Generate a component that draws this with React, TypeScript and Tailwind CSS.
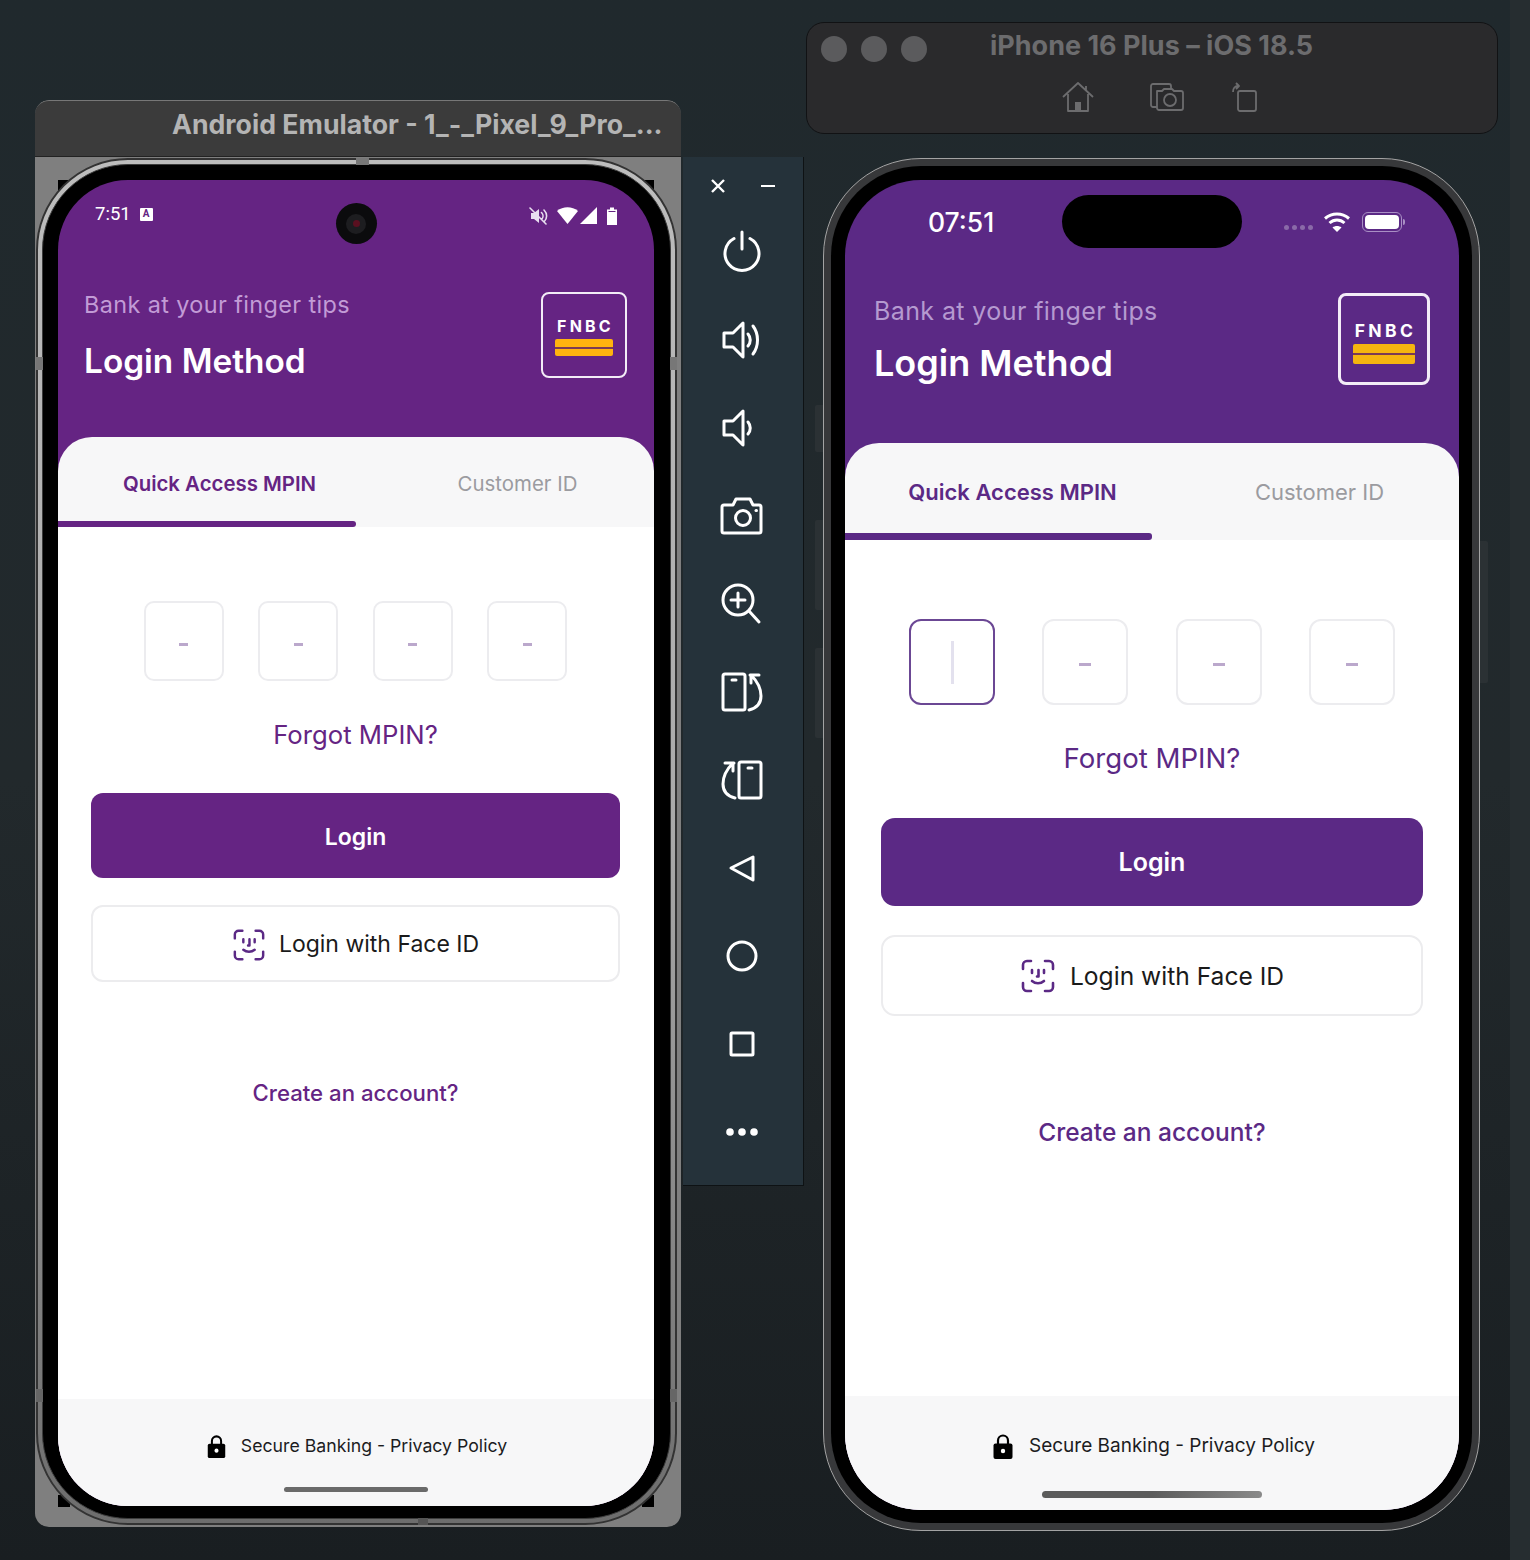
type Theme = {
  purple: string
  purpleText: string
  bank: string
  title: string
  logoBox: string
  logoText: string
  logoBars: string
  tabs: string
  tabPad: string
  tabActive: string
  tabIdle: string
  bar: string
  body: string
  pins: string
  pin: string
  dash: string
  forgot: string
  login: string
  face: string
  faceIcon: string
  create: string
  footer: string
  footerText: string
  lock: string
  homeBar: string
}

const android: Theme = {
  purple: 'bg-[#652483]',
  purpleText: 'text-[#652483]',
  bank: 'text-[23.4px] leading-[30px] tracking-[0.4px] text-[#c29bd6] -mt-[2px]',
  title: 'text-[33.4px] leading-[40px] font-semibold mt-[21px]',
  logoBox: 'w-[86px] h-[86px] rounded-[8px] border-[2.5px] pt-[23px] gap-[4px]',
  logoText: 'text-[16px] leading-[18px] tracking-[3.2px] pl-[3px]',
  logoBars: 'w-[58px] h-[17px] bg-[#ffb30f]',
  tabs: 'h-[90px]',
  tabPad: 'pl-[25px] pt-[10px]',
  tabActive: 'text-[20.4px]',
  tabIdle: 'text-[20.4px]',
  bar: 'h-[6px]',
  body: 'pl-[33px] pr-[34px] pt-[74px]',
  pins: 'gap-[34.4px]',
  pin: 'w-[80px] h-[80px] rounded-[10px]',
  dash: 'w-[9px] h-[3px] mt-[6px]',
  forgot: 'mt-[38px] text-[25.7px] leading-[32px]',
  login: 'mt-[42px] h-[85px] pt-[3px] rounded-[12px] text-[23px]',
  face: 'mt-[27px] h-[77px] pt-[2px] rounded-[12px] text-[23px] gap-[13px]',
  faceIcon: 'w-[34px] h-[34px]',
  create: 'mt-[96px] text-[22.2px] leading-[30px]',
  footer: 'h-[107px] pt-[35px] pl-[2px]',
  footerText: 'text-[17.7px] leading-[24px] gap-[15px]',
  lock: 'w-[19px] h-[23px]',
  homeBar: 'w-[144px] h-[5px] bottom-[14px] bg-[#6a6a6a]',
}

const ios: Theme = {
  purple: 'bg-[#5b2985]',
  purpleText: 'text-[#5b2985]',
  bank: 'text-[25px] leading-[30px] tracking-[0.4px] text-[#b59ad0] mt-[3px]',
  title: 'text-[36px] leading-[44px] font-semibold mt-[15px]',
  logoBox: 'w-[92px] h-[92px] rounded-[8px] border-[3px] pt-[25px] gap-[3px]',
  logoText: 'text-[17.5px] leading-[20px] tracking-[3.4px] pl-[3px]',
  logoBars: 'w-[62px] h-[20px] bg-[#f5b50f]',
  tabs: 'h-[97px]',
  tabPad: 'pl-[28px] pt-[8px]',
  tabActive: 'text-[22px]',
  tabIdle: 'text-[22px]',
  bar: 'h-[7px]',
  body: 'px-[36px] pt-[79px]',
  pins: 'gap-[47.3px]',
  pin: 'w-[86px] h-[86px] rounded-[12px]',
  dash: 'w-[12px] h-[3px] mt-[4px]',
  forgot: 'mt-[36px] text-[27.6px] leading-[34px]',
  login: 'mt-[43px] h-[88px] pt-[1px] rounded-[14px] text-[25px]',
  face: 'mt-[29px] h-[81px] pt-[1px] rounded-[14px] text-[24.6px] gap-[14px]',
  faceIcon: 'w-[36px] h-[36px]',
  create: 'mt-[100px] text-[24.5px] leading-[32px]',
  footer: 'h-[114px] pt-[37px] pl-[4px]',
  footerText: 'text-[19px] leading-[26px] gap-[16px]',
  lock: 'w-[20px] h-[25px]',
  homeBar: 'w-[220px] h-[7px] bottom-[12px] bg-gradient-to-r from-[#5c5c5c] via-[#5c5c5c] to-[#8a8a8a]',
}

function FaceIdIcon({ className }: { className: string }) {
  return (
    <svg viewBox="0 0 36 36" fill="none" stroke="#5b2985" strokeWidth="2.6" strokeLinecap="round" strokeLinejoin="round" className={className}>
      <path d="M3 11V7a4 4 0 0 1 4-4h4M25 3h4a4 4 0 0 1 4 4v4M33 25v4a4 4 0 0 1-4 4h-4M11 33H7a4 4 0 0 1-4-4v-4" />
      <path d="M12 12v3M24 12v3M18.500 12v6.500h-1.500M12 23c3.500 3 8.500 3 12 0" />
    </svg>
  )
}

function LockIcon({ className }: { className: string }) {
  return (
    <svg viewBox="0 0 20 25" className={className}>
      <path d="M5 11V6.500a5 5 0 0 1 10 0V11" fill="none" stroke="black" strokeWidth="2.200" />
      <rect x="0.500" y="9.500" width="19" height="15.500" rx="2" fill="black" />
      <circle cx="10" cy="17" r="2.200" fill="white" />
    </svg>
  )
}

function FnbcLogo({ t }: { t: Theme }) {
  return (
    <div className={`flex flex-col items-center shrink-0 border-[#f3ecf7] ${t.logoBox}`}>
      <span className={`font-bold text-white ${t.logoText}`}>FNBC</span>
      <div className={`flex flex-col justify-center rounded-[2px] ${t.logoBars}`}>
        <div className="h-[2px] bg-[#7a3a55]" />
      </div>
    </div>
  )
}

function LoginSheet({ t, focused }: { t: Theme; focused?: boolean }) {
  return (
    <div className="flex-1 flex flex-col bg-[#f7f7f8] rounded-t-[34px] overflow-hidden relative">
      <div className={`flex ${t.tabs}`}>
        <div className="flex-1 flex flex-col">
          <div className={`flex-1 flex items-center justify-center font-semibold ${t.purpleText} ${t.tabPad} ${t.tabActive}`}>Quick Access MPIN</div>
          <div className={`rounded-r-[3px] ${t.bar} ${t.purple}`} />
        </div>
        <div className="flex-1 flex flex-col">
          <div className={`flex-1 flex items-center justify-center text-[#9b9ba0] ${t.tabPad} ${t.tabIdle}`}>Customer ID</div>
          <div className={t.bar} />
        </div>
      </div>
      <div className={`flex-1 flex flex-col bg-white ${t.body}`}>
        <div className={`flex justify-center ${t.pins}`}>
          {[0, 1, 2, 3].map((i) => (
            <div
              key={i}
              className={`flex items-center justify-center border-2 ${t.pin} ${focused && i === 0 ? 'border-[#6b4794]' : 'border-[#ececef]'}`}
            >
              {focused && i === 0 ? (
                <div className="w-[3px] h-[43px] bg-[#e3e1ee]" />
              ) : (
                <div className={`bg-[#bba8cc] ${t.dash}`} />
              )}
            </div>
          ))}
        </div>
        <div className={`text-center ${t.purpleText} ${t.forgot}`}>Forgot MPIN?</div>
        <button className={`flex items-center justify-center font-semibold text-white ${t.purple} ${t.login}`}>Login</button>
        <button className={`flex items-center justify-center border-2 border-[#ececee] bg-white text-[#1a1a1a] ${t.face}`}>
          <FaceIdIcon className={t.faceIcon} />
          Login with Face ID
        </button>
        <div className={`text-center font-medium ${t.purpleText} ${t.create}`}>Create an account?</div>
      </div>
      <div className={`relative flex justify-center items-start bg-[#f7f7f8] ${t.footer}`}>
        <div className={`flex items-center text-[#1c1c1e] ${t.footerText}`}>
          <LockIcon className={t.lock} />
          Secure Banking - Privacy Policy
        </div>
        <div className={`absolute left-1/2 -translate-x-1/2 rounded-full ${t.homeBar}`} />
      </div>
    </div>
  )
}

function AndroidStatusIcons() {
  return (
    <svg width="90" height="20" viewBox="0 0 90 20" fill="white">
      <g stroke="#e8dff0" strokeWidth="1.600" fill="none" strokeLinecap="round">
        <path d="M2 7h3l5-4v14l-5-4H2z" fill="#e8dff0" stroke="none" />
        <path d="M12.500 6.500c2 2 2 5 0 7M15 4c3.500 3.500 3.500 8.500 0 12M1 2l16 16" />
      </g>
      <path d="M28 5c6-5 15-5 21 0L38.500 18z" />
      <path d="M68 1v17H51z" />
      <path d="M78 3.500h3V1.500h4v2h3V19H78z" />
      <rect x="79.500" y="5" width="7" height="1" fill="#652483" />
    </svg>
  )
}

function AndroidPhone() {
  return (
    <div className="relative z-10 w-[641px] h-[1367px] rounded-[92px] border-2 border-[#333] bg-gradient-to-b from-[#bdbdbd] via-[#a9a9a9] to-[#6d6d6d] p-[4px]">
      <div className="h-full rounded-[86px] border border-[#3c3c3c] bg-black pt-[15px] pl-[15px] pr-[16px] pb-[12px]">
        <div className="h-full rounded-[70px] bg-[#652483] overflow-hidden flex flex-col font-['Inter',sans-serif]">
          <div className="flex flex-col text-white h-[257px]">
            <div className="grid grid-cols-[1fr_auto_1fr] items-start h-[112px] pt-[23px] px-[37px]">
              <div className="flex items-center gap-[9px] pt-[1px] text-[18.500px] leading-[20px] font-['Roboto',sans-serif]">
                7:51
                <span className="flex items-center justify-center w-[13px] h-[13px] bg-white text-[#652483] text-[10px] leading-none font-bold rounded-[1px]">A</span>
              </div>
              <div className="flex items-center justify-center w-[41px] h-[41px] rounded-full bg-[#0b0b0d]">
                <div className="flex items-center justify-center w-[20px] h-[20px] rounded-full bg-[#1d1d20]">
                  <div className="w-[7px] h-[7px] rounded-full bg-[#5a1020]" />
                </div>
              </div>
              <div className="flex justify-end pt-[3px] -mr-[2px]">
                <AndroidStatusIcons />
              </div>
            </div>
            <div className="flex justify-between pl-[26px] pr-[27px]">
              <div className="flex flex-col">
                <span className={android.bank}>Bank at your finger tips</span>
                <span className={android.title}>Login Method</span>
              </div>
              <FnbcLogo t={android} />
            </div>
          </div>
          <LoginSheet t={android} />
        </div>
      </div>
      <div className="absolute left-[318px] -top-[2px] w-[13px] h-[7px] bg-[#777]" />
      <div className="absolute left-[380px] -bottom-[2px] w-[10px] h-[7px] bg-[#555]" />
      <div className="absolute -left-[2px] top-[197px] w-[7px] h-[13px] bg-[#777]" />
      <div className="absolute -right-[2px] top-[197px] w-[7px] h-[13px] bg-[#777]" />
      <div className="absolute -left-[2px] top-[1229px] w-[7px] h-[13px] bg-[#666]" />
      <div className="absolute -right-[2px] top-[1229px] w-[7px] h-[13px] bg-[#666]" />
    </div>
  )
}

function IosPhone() {
  return (
    <div className="absolute left-[823px] top-[158px] w-[657px] h-[1373px] rounded-[98px] border border-[#a3a3a3] bg-[#37383a] p-[7px]">
      <div className="h-full rounded-[90px] bg-black pt-[14px] pl-[14px] pr-[13px] pb-[13px]">
        <div className="h-full rounded-[76px] bg-[#5b2985] overflow-hidden flex flex-col font-['Inter',sans-serif]">
          <div className="flex flex-col text-white h-[263px]">
            <div className="grid grid-cols-[1fr_auto_1fr] items-center h-[113px] pb-[45px] pt-[15px]">
              <div className="pl-[83px] text-[26.500px] leading-[32px] font-medium">07:51</div>
              <div className="w-[180px] h-[53px] rounded-full bg-black" />
              <div className="flex items-center justify-end pr-[54px]">
                <div className="flex gap-[3px] pt-[12px] mr-[10px]">
                  {[0, 1, 2, 3].map((i) => (
                    <div key={i} className="w-[5px] h-[5px] rounded-full bg-[#8a6aa8]" />
                  ))}
                </div>
                <svg width="28" height="22" viewBox="0 0 28 22" fill="none" stroke="white" strokeWidth="3" className="mr-[11px]">
                  <path d="M2 7.500c7-6 17-6 24 0M6.500 12c4.500-4 10.500-4 15 0" />
                  <path d="M14 21l-4.500-4.500c2.500-2 6.500-2 9 0z" fill="white" stroke="none" />
                </svg>
                <div className="flex items-center">
                  <div className="w-[40px] h-[20px] rounded-[6px] border-[1.5px] border-[#a98fc4] p-[2px]">
                    <div className="h-full rounded-[4px] bg-white" />
                  </div>
                  <div className="w-[2px] h-[6px] rounded-r-full bg-[#a98fc4] ml-[1px]" />
                </div>
              </div>
            </div>
            <div className="flex justify-between pl-[29px] pr-[29px]">
              <div className="flex flex-col">
                <span className={ios.bank}>Bank at your finger tips</span>
                <span className={ios.title}>Login Method</span>
              </div>
              <FnbcLogo t={ios} />
            </div>
          </div>
          <LoginSheet t={ios} focused />
        </div>
      </div>
      <div className="absolute -left-[9px] top-[246px] w-[8px] h-[47px] rounded-l-[2px] bg-[#2b3134]" />
      <div className="absolute -left-[9px] top-[361px] w-[8px] h-[90px] rounded-l-[2px] bg-[#2b3134]" />
      <div className="absolute -left-[9px] top-[489px] w-[8px] h-[90px] rounded-l-[2px] bg-[#2b3134]" />
      <div className="absolute -right-[9px] top-[382px] w-[8px] h-[142px] rounded-r-[2px] bg-[#2b3134]" />
    </div>
  )
}

function ToolIcon({ children }: { children: React.ReactNode }) {
  return (
    <div className="h-[88px] flex items-center justify-center">
      <svg width="48" height="48" viewBox="0 0 48 48" fill="none" stroke="white" strokeWidth="3" strokeLinecap="round" strokeLinejoin="round">
        {children}
      </svg>
    </div>
  )
}

function EmulatorToolbar() {
  return (
    <div className="absolute left-[683px] top-[157px] w-[121px] h-[1029px] pr-[2px] bg-[#25323a] border-r border-b border-[#0e1214]">
      <div className="h-[51px] relative">
        <svg width="16" height="16" viewBox="0 0 16 16" fill="none" stroke="white" strokeWidth="2.400" className="absolute left-[27px] top-[21px]">
          <path d="M2 2l12 12M14 2L2 14" />
        </svg>
        <div className="absolute left-[78px] top-[28px] w-[14px] h-[2px] bg-white" />
      </div>
      <ToolIcon>
        <path d="M16 10.500a17 17 0 1 0 16 0M24 4v17" />
      </ToolIcon>
      <ToolIcon>
        <path d="M6 17h9L25 7v34L15 31H6z" />
        <path d="M30 18c3 3.500 3 8.500 0 12M35 10c6 8 6 20 0 28" />
      </ToolIcon>
      <ToolIcon>
        <path d="M6 17h9L25 7v34L15 31H6z" />
        <path d="M30 18c3 3.500 3 8.500 0 12" />
      </ToolIcon>
      <ToolIcon>
        <path d="M7 13h8l3-6h14l3 6h6a2 2 0 0 1 2 2v24a2 2 0 0 1-2 2H6a2 2 0 0 1-2-2V15a2 2 0 0 1 2-2z" />
        <circle cx="25" cy="26" r="7.500" />
        <path d="M38 18.500h.5" />
      </ToolIcon>
      <ToolIcon>
        <circle cx="20" cy="20" r="15" />
        <path d="M20 13v14M13 20h14M31 31l10 11" />
      </ToolIcon>
      <ToolIcon>
        <rect x="5" y="6" width="22" height="36" rx="2" />
        <path d="M14 12h4M31 42c8-2 12-7 12-14 0-8-4-15-10-21M32 7h9M33 7v8" />
      </ToolIcon>
      <ToolIcon>
        <rect x="21" y="6" width="22" height="36" rx="2" />
        <path d="M30 12h4M17 42c-8-2-12-7-12-14 0-8 4-15 10-21M16 7H7M15 7v8" />
      </ToolIcon>
      <ToolIcon>
        <path d="M13 24l22-11v23z" />
      </ToolIcon>
      <ToolIcon>
        <circle cx="24" cy="24" r="14" />
      </ToolIcon>
      <ToolIcon>
        <rect x="13" y="13" width="22" height="22" rx="1" />
      </ToolIcon>
      <ToolIcon>
        <g fill="white" stroke="none">
          <circle cx="12" cy="24" r="3.800" />
          <circle cx="24" cy="24" r="3.800" />
          <circle cx="36" cy="24" r="3.800" />
        </g>
      </ToolIcon>
    </div>
  )
}

function AndroidWindow() {
  return (
    <div className="absolute left-[35px] top-[100px] w-[646px] h-[1427px] flex flex-col rounded-[14px] overflow-hidden">
      <div className="h-[57px] shrink-0 bg-[#3b3b3b] border-t border-[#777] rounded-t-[14px] border-b border-b-[#222] pl-[137px] pt-[3px] font-['Inter',sans-serif] font-bold text-[26.700px] leading-[40px] text-[#b4b4b4] whitespace-nowrap">
        Android Emulator - 1_-_Pixel_9_Pro_...
      </div>
      <div className="flex-1 relative bg-[#7f7f7f] pt-[1px] pl-[1px]">
        <div className="absolute left-[23px] top-[23px] w-[12px] h-[12px] bg-black" />
        <div className="absolute left-[607px] top-[23px] w-[12px] h-[12px] bg-black" />
        <div className="absolute left-[23px] top-[1338px] w-[12px] h-[12px] bg-black" />
        <div className="absolute left-[607px] top-[1338px] w-[12px] h-[12px] bg-black" />
        <AndroidPhone />
      </div>
    </div>
  )
}

function SimulatorBar() {
  return (
    <div className="absolute left-[806px] top-[22px] w-[692px] h-[112px] rounded-[18px] bg-[#2a2a2c] border border-[#111214] font-['Inter',sans-serif]">
      <div className="flex items-center h-[52px] pl-[14px]">
        <div className="flex gap-[14px]">
          <div className="w-[26px] h-[26px] rounded-full bg-[#5b5b5d]" />
          <div className="w-[26px] h-[26px] rounded-full bg-[#5b5b5d]" />
          <div className="w-[26px] h-[26px] rounded-full bg-[#5b5b5d]" />
        </div>
        <span className="ml-[63px] -mt-[6px] font-bold text-[27px] text-[#6c6c6e] whitespace-nowrap">iPhone 16 Plus – iOS 18.5</span>
      </div>
      <div className="flex items-center pl-[255px] gap-[56px] pt-[7px] text-[#6c6c6e]">
        <svg width="32" height="30" viewBox="0 0 32 30" fill="none" stroke="currentColor" strokeWidth="1.800" strokeLinejoin="round">
          <path d="M1 15L16 1l15 14M6 12v17h20V12M24 4v5" />
          <rect x="13" y="20" width="6" height="9" fill="currentColor" stroke="none" />
        </svg>
        <svg width="34" height="28" viewBox="0 0 34 28" fill="none" stroke="currentColor" strokeWidth="1.800" strokeLinejoin="round">
          <path d="M7 24H3a2 2 0 0 1-2-2V3a2 2 0 0 1 2-2h16a2 2 0 0 1 2 2v3" />
          <path d="M7 8h5l2-2h8l2 2h7a2 2 0 0 1 2 2v15a2 2 0 0 1-2 2H9a2 2 0 0 1-2-2z" />
          <circle cx="20" cy="17" r="6" />
        </svg>
        <svg width="28" height="30" viewBox="0 0 28 30" fill="none" stroke="currentColor" strokeWidth="1.800" strokeLinejoin="round" className="-ml-[10px]">
          <rect x="8" y="9" width="18" height="20" rx="2" />
          <path d="M3 10c0-4 2-6 5-6M6 1l3 3-3 3" />
        </svg>
      </div>
    </div>
  )
}

export default function App() {
  return (
    <div className="relative w-[1530px] h-[1560px] overflow-hidden bg-gradient-to-b from-[#20292d] via-[#22292c] to-[#191e21]">
      <div className="absolute right-0 top-0 w-[20px] h-full bg-[#262d30]" />
      <SimulatorBar />
      <AndroidWindow />
      <EmulatorToolbar />
      <IosPhone />
    </div>
  )
}
